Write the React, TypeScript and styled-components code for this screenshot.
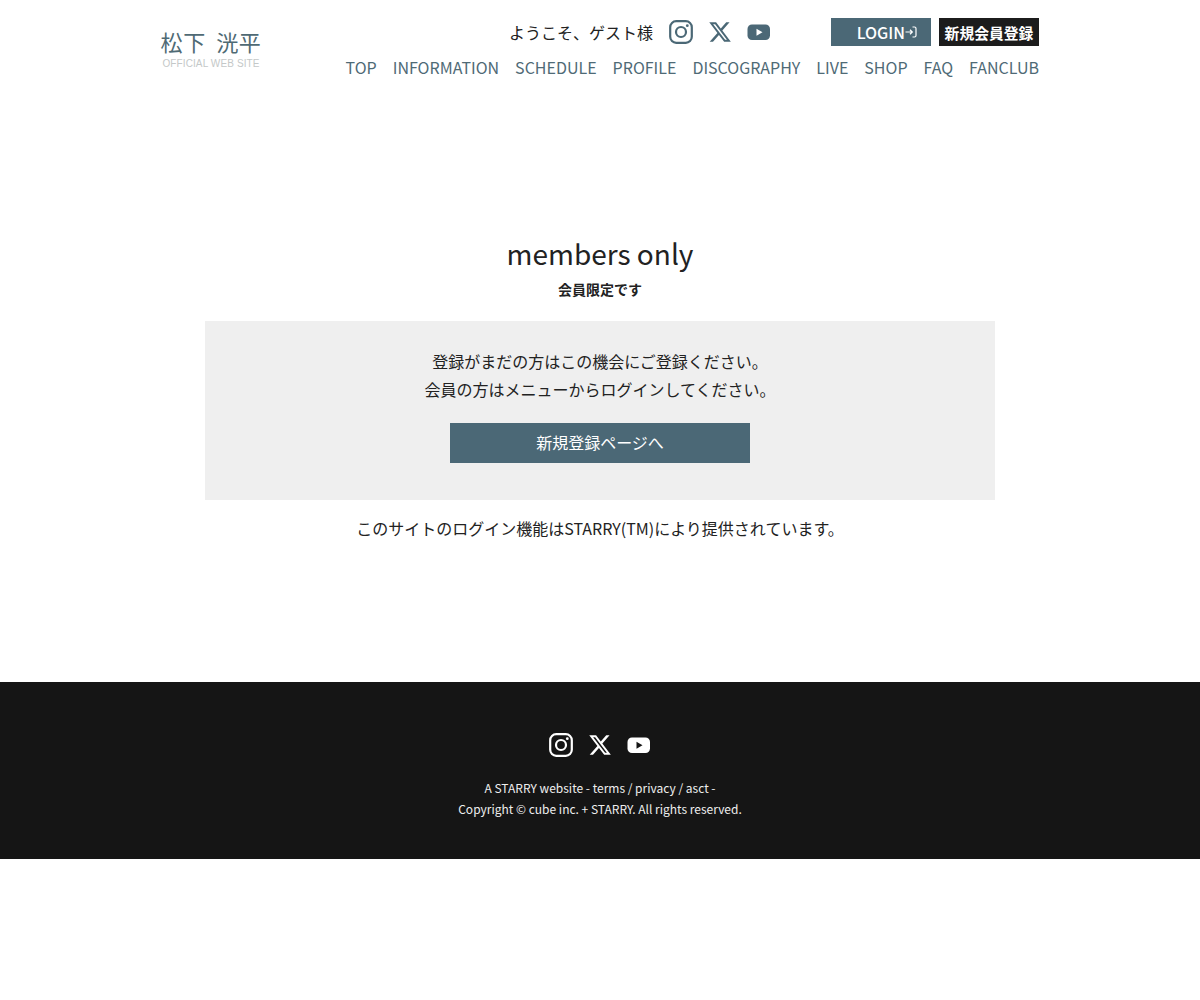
import styled, { createGlobalStyle } from "styled-components";

const GlobalStyle = createGlobalStyle`
  html, body {
    margin: 0;
    padding: 0;
    background: #fff;
    color: #222;
    font-family: "Noto Sans CJK JP", "Noto Sans", sans-serif;
  }
  a {
    color: inherit;
    text-decoration: none;
  }
`;

const HeaderBar = styled.header`
  width: 880px;
  height: 100px;
  margin: 0 auto;
  padding-right: 1px;
  box-sizing: border-box;
  display: flex;
  justify-content: space-between;
`;

const LogoBlock = styled.div`
  width: 102px;
  padding-top: 26px;
  display: flex;
  flex-direction: column;
  align-items: center;
`;

const LogoName = styled.div`
  font-size: 22px;
  line-height: 30px;
  font-weight: 400;
  color: #4f6a74;
  white-space: nowrap;
  letter-spacing: 0.6px;
  word-spacing: 5px;
`;

const LogoSub = styled.div`
  font-family: "Liberation Sans", sans-serif;
  font-size: 10px;
  line-height: 14px;
  margin-top: 1px;
  color: #c4c8c8;
  letter-spacing: 0.12px;
  white-space: nowrap;
`;

const HeaderRight = styled.div`
  display: flex;
  flex-direction: column;
  align-items: flex-end;
`;

const TopRow = styled.div`
  display: flex;
  align-items: center;
  height: 28px;
  margin-top: 18px;
`;

const Welcome = styled.span`
  font-size: 16px;
  color: #222;
  margin-right: 16px;
`;

const SnsRow = styled.div<{ $gap: number }>`
  display: flex;
  align-items: center;
  gap: ${(p) => p.$gap}px;
`;

const SnsLink = styled.a<{ $light?: boolean }>`
  display: flex;
  color: ${(p) => (p.$light ? "#fff" : "#4b6876")};
`;

const LoginButton = styled.a`
  width: 100px;
  height: 28px;
  margin-left: 60px;
  background: #4b6876;
  color: #fff;
  font-size: 16px;
  font-weight: 500;
  display: flex;
  align-items: center;
  justify-content: flex-end;
  padding-right: 14px;
  box-sizing: border-box;
`;

const RegisterButton = styled.a`
  width: 100px;
  height: 28px;
  margin-left: 8px;
  background: #1c1c1c;
  color: #fff;
  font-size: 14.8px;
  font-weight: 700;
  display: flex;
  align-items: center;
  justify-content: center;
  white-space: nowrap;
`;

const Nav = styled.nav`
  display: flex;
  gap: 16px;
  margin-top: 7px;
  font-size: 16px;
  line-height: 28px;
  color: #4f6a76;
`;

const Main = styled.main`
  height: 582px;
  display: flex;
  flex-direction: column;
  align-items: center;
  padding-top: 133px;
  box-sizing: border-box;
`;

const Title = styled.h1`
  margin: 0;
  font-size: 28px;
  line-height: 40px;
  font-weight: 400;
  color: #222;
`;

const SubTitle = styled.p`
  margin: 6px 0 0;
  font-size: 14px;
  line-height: 20px;
  font-weight: 700;
`;

const NoticeBox = styled.section`
  width: 790px;
  height: 179px;
  margin-top: 22px;
  background: #efefef;
  display: flex;
  flex-direction: column;
  align-items: center;
  padding-top: 26px;
  box-sizing: border-box;
`;

const NoticeText = styled.p`
  margin: 0;
  font-size: 16px;
  line-height: 28px;
  text-align: center;
`;

const PrimaryButton = styled.a`
  width: 300px;
  height: 40px;
  margin-top: 20px;
  background: #4b6876;
  color: #fff;
  font-size: 16px;
  padding-bottom: 2px;
  box-sizing: border-box;
  display: flex;
  align-items: center;
  justify-content: center;
`;

const Provided = styled.p`
  margin: 14px 0 0;
  font-size: 16px;
  line-height: 28px;
`;

const Footer = styled.footer`
  height: 177px;
  background: #151515;
  color: #eee;
  display: flex;
  flex-direction: column;
  align-items: center;
  padding-top: 51px;
  box-sizing: border-box;
`;

const Legal = styled.p`
  margin: 20px 0 0;
  font-size: 12px;
  line-height: 21px;
  text-align: center;
`;

const InstagramIcon = () => (
  <svg width="24" height="24" viewBox="0 0 24 24" fill="none" stroke="currentColor">
    <rect x="1.2" y="1.2" width="21.6" height="21.6" rx="6" strokeWidth="2.2" />
    <circle cx="12" cy="12" r="5" strokeWidth="2.2" />
    <circle cx="18.3" cy="5.700" r="1.4" fill="currentColor" stroke="none" />
  </svg>
);

const XIcon = () => (
  <svg width="24" height="24" viewBox="0 0 24 24" fill="currentColor">
    <path d="M18.244 2.25h3.308l-7.227 8.26 8.502 11.24H16.17l-5.214-6.817L4.99 21.75H1.68l7.73-8.835L1.254 2.25H8.08l4.713 6.231zm-1.161 17.52h1.833L7.084 4.126H5.117z" />
  </svg>
);

const YoutubeIcon = () => (
  <svg width="24" height="24" viewBox="0 0 24 24">
    <rect x="0.5" y="4.5" width="22.5" height="15.5" rx="4.5" fill="currentColor" />
    <path d="M9.500 8.700l6 3.500-6 3.500z" fill="var(--play)" />
  </svg>
);

const PlayTint = styled.span<{ $tint: string }>`
  display: flex;
  --play: ${(p) => p.$tint};
`;

const LoginIcon = () => (
  <svg width="12" height="12" viewBox="0 0 12 12" fill="none" stroke="currentColor" strokeWidth="1.2">
    <path d="M0.5 6h6.5M5 3.8L7.3 6 5 8.2" />
    <path d="M7.5 1h2a1.5 1.5 0 0 1 1.5 1.5v7A1.5 1.5 0 0 1 9.500 11h-2" />
  </svg>
);

const navItems = ["TOP", "INFORMATION", "SCHEDULE", "PROFILE", "DISCOGRAPHY", "LIVE", "SHOP", "FAQ", "FANCLUB"];

function SnsIcons({ light, gap }: { light?: boolean; gap: number }) {
  return (
    <SnsRow $gap={gap}>
      <SnsLink href="#" $light={light}><InstagramIcon /></SnsLink>
      <SnsLink href="#" $light={light}><XIcon /></SnsLink>
      <SnsLink href="#" $light={light}>
        <PlayTint $tint={light ? "#151515" : "#fff"}><YoutubeIcon /></PlayTint>
      </SnsLink>
    </SnsRow>
  );
}

export default function App() {
  return (
    <>
      <GlobalStyle />
      <HeaderBar>
        <LogoBlock>
          <LogoName>松下 洸平</LogoName>
          <LogoSub>OFFICIAL WEB SITE</LogoSub>
        </LogoBlock>
        <HeaderRight>
          <TopRow>
            <Welcome>ようこそ、ゲスト様</Welcome>
            <SnsIcons gap={15} />
            <LoginButton href="#">LOGIN<LoginIcon /></LoginButton>
            <RegisterButton href="#">新規会員登録</RegisterButton>
          </TopRow>
          <Nav>
            {navItems.map((item) => (
              <a href="#" key={item}>{item}</a>
            ))}
          </Nav>
        </HeaderRight>
      </HeaderBar>
      <Main>
        <Title>members only</Title>
        <SubTitle>会員限定です</SubTitle>
        <NoticeBox>
          <NoticeText>
            登録がまだの方はこの機会にご登録ください。
            <br />
            会員の方はメニューからログインしてください。
          </NoticeText>
          <PrimaryButton href="#">新規登録ページへ</PrimaryButton>
        </NoticeBox>
        <Provided>このサイトのログイン機能はSTARRY(TM)により提供されています。</Provided>
      </Main>
      <Footer>
        <SnsIcons light gap={15} />
        <Legal>
          A STARRY website - terms / privacy / asct -
          <br />
          Copyright © cube inc. + STARRY. All rights reserved.
        </Legal>
      </Footer>
    </>
  );
}
